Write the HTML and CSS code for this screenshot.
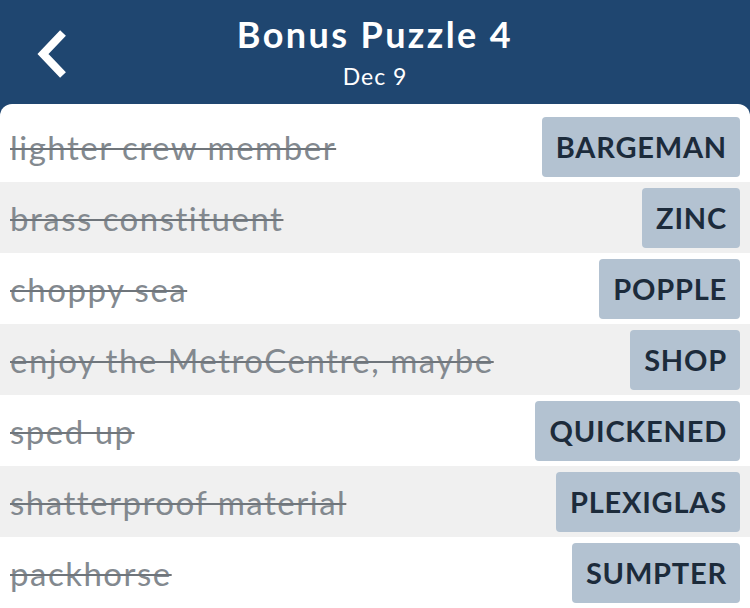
FILE: index.html
```html
<!DOCTYPE html>
<html lang="en">
<head>
    <meta charset="UTF-8">
    <meta name="viewport" content="width=device-width, initial-scale=1.0">
    <title>Bonus Puzzle 4</title>
    <link rel="stylesheet" href="styles.css">
</head>
<body>
    <header class="top-bar">
        <a class="back" href="#">
            <svg width="34" height="50" viewBox="0 0 34 50">
                <path d="M28 4 L8 25 L28 46" fill="none" stroke="#fff" stroke-width="8" stroke-linecap="butt" stroke-linejoin="miter"/>
            </svg>
        </a>
        <div class="title">
            <h1>Bonus Puzzle 4</h1>
            <div class="date">Dec 9</div>
        </div>
    </header>

    <main class="card">
        <div class="row"><span class="clue">lighter crew member</span><span class="answer">BARGEMAN</span></div>
        <div class="row"><span class="clue">brass constituent</span><span class="answer">ZINC</span></div>
        <div class="row"><span class="clue">choppy sea</span><span class="answer">POPPLE</span></div>
        <div class="row"><span class="clue">enjoy the MetroCentre, maybe</span><span class="answer">SHOP</span></div>
        <div class="row"><span class="clue">sped up</span><span class="answer">QUICKENED</span></div>
        <div class="row"><span class="clue">shatterproof material</span><span class="answer">PLEXIGLAS</span></div>
        <div class="row"><span class="clue">packhorse</span><span class="answer">SUMPTER</span></div>
    </main>
</body>
</html>
```

FILE: styles.css
```css
body {
    margin: 0;
    background-color: #1f4670;
    font-family: Lato, "Noto Sans", sans-serif;
    overflow: hidden;
}
.top-bar {
    height: 104px;
    display: flex;
    align-items: center;
    justify-content: center;
    position: relative;
    color: #fff;
}
.back {
    position: absolute;
    left: 35px;
    top: 29px;
    display: block;
}
.back svg {
    display: block;
}
.title {
    text-align: center;
    margin-top: -2px;
}
.title h1 {
    margin: 0;
    font-size: 36px;
    font-weight: bold;
    line-height: 40px;
    letter-spacing: 2.4px;
}
.date {
    font-size: 23px;
    line-height: 26px;
    margin-top: 9px;
    letter-spacing: 1px;
}
.card {
    background-color: #fff;
    border-radius: 12px 12px 0 0;
    padding-top: 7px;
    min-height: 504px;
}
.row {
    height: 71px;
    display: flex;
    align-items: center;
    justify-content: space-between;
    padding: 0 10px;
}
.row:nth-child(even) {
    background-color: #f0f0f0;
}
.clue {
    font-size: 33px;
    color: #83898f;
    letter-spacing: 1.5px;
    text-decoration: line-through;
    text-decoration-color: #6f757b;
    text-decoration-thickness: 2px;
    white-space: nowrap;
}
.answer {
    background-color: #b3c2d1;
    color: #1c2b3b;
    font-size: 29px;
    font-weight: bold;
    letter-spacing: 0.8px;
    height: 60px;
    line-height: 60px;
    padding: 0 13px 0 14px;
    border-radius: 4px;
}
```
